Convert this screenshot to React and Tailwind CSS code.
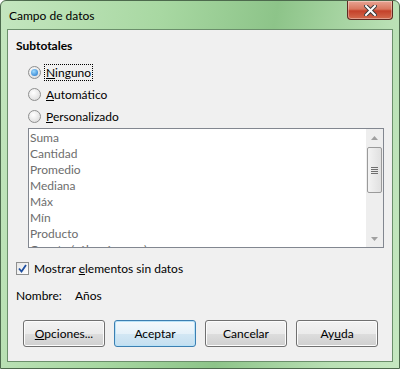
import React, { useState } from 'react';

const font = { fontFamily: '"Segoe UI", Lato, "Noto Sans", sans-serif' };

const items = ['Suma', 'Cantidad', 'Promedio', 'Mediana', 'Máx', 'Mín', 'Producto', 'Cuenta (sólo números)', 'DesvEst (muestra)', 'DesvEstP (población)', 'Var (muestra)', 'VarP (población)'];

const Radio = ({ checked, onClick, children }) => (
    <div className="flex items-center h-[22px] cursor-default" onClick={onClick}>
        <span className="w-[13px] h-[13px] shrink-0 rounded-full border border-[#8e8f8f] bg-[radial-gradient(circle_at_40%_35%,#ffffff,#d6d6d6)] flex items-center justify-center">
            {checked && <span className="w-[7px] h-[7px] rounded-full bg-[radial-gradient(circle_at_40%_35%,#9fdcff,#1a6fc7)]" />}
        </span>
        <span className={`ml-[4px] px-[1px] leading-[15px] ${checked ? 'outline outline-1 outline-dotted outline-black' : ''}`}>{children}</span>
    </div>
);

const Button = ({ children, primary }) => (
    <button
        className={`w-[82px] h-[27px] rounded-[3px] border text-[12px] text-black ${primary
            ? 'border-[#3c7fb1] bg-[linear-gradient(to_bottom,#f4f9fc_0%,#e5f1f9_50%,#d3e7f4_51%,#c4dff0_100%)] shadow-[inset_0_0_0_1px_#b8e2f8]'
            : 'border-[#707070] bg-[linear-gradient(to_bottom,#f2f2f2_0%,#ebebeb_50%,#dddddd_51%,#cfcfcf_100%)] shadow-[inset_0_0_0_1px_#fcfcfc]'}`}
    >
        {children}
    </button>
);

const App = () => {
    const [mode, setMode] = useState('none');
    const [showEmpty, setShowEmpty] = useState(true);

    return (
        <div style={font} className="w-[400px] h-[369px] flex flex-col rounded-t-[6px] border border-[#4d6a4d] bg-[linear-gradient(100deg,#c4e6bf_0%,#a8d8a2_35%,#8dc489_60%,#b9e0b4_85%,#c6e8c1_100%)] text-[12px] text-black overflow-hidden">
            {/* title bar */}
            <div className="h-[28px] flex justify-between shrink-0">
                <span className="pl-[8px] pt-[6px] text-[12px] text-black">Campo de datos</span>
                <div className="mr-[6px] w-[46px] h-[19px] rounded-b-[4px] border border-t-0 border-[#5e2a22] bg-[linear-gradient(to_bottom,#e8a493_0%,#d9775f_45%,#c4412a_55%,#d36b4e_100%)] flex items-center justify-center shadow-[inset_0_0_0_1px_rgba(255,255,255,0.35)]">
                    <svg width="13" height="11" viewBox="0 0 13 11">
                        <path d="M2 1 L11 10 M11 1 L2 10" stroke="#3b3b3b" strokeWidth="4" strokeLinecap="square" />
                        <path d="M2 1 L11 10 M11 1 L2 10" stroke="#ffffff" strokeWidth="2" strokeLinecap="square" />
                    </svg>
                </div>
            </div>

            {/* client area */}
            <div className="mx-[6px] mb-[6px] flex-1 border border-[#6b8f6b] bg-[#f0f0f0] px-[8px] flex flex-col">
                <div className="font-bold mt-[7px] h-[17px] leading-[17px]">Subtotales</div>

                <div className="pl-[12px] mt-[7px] flex flex-col">
                    <Radio checked={mode === 'none'} onClick={() => setMode('none')}><u>N</u>inguno</Radio>
                    <Radio checked={mode === 'auto'} onClick={() => setMode('auto')}><u>A</u>utomático</Radio>
                    <Radio checked={mode === 'custom'} onClick={() => setMode('custom')}><u>P</u>ersonalizado</Radio>
                </div>

                <div className="ml-[12px] mt-[1px] h-[120px] border border-[#828790] bg-white flex">
                    <div className="flex-1 overflow-hidden pl-[1px] pt-[1px] text-[#6d6d6d]">
                        {items.map((it) => (
                            <div key={it} className="h-[16px] leading-[16px] whitespace-nowrap">{it}</div>
                        ))}
                    </div>
                    <div className="w-[17px] bg-[#eeeeee] flex flex-col items-center">
                        <div className="h-[17px] flex items-center justify-center">
                            <svg width="7" height="4" viewBox="0 0 7 4"><path d="M3.5 0 L7 4 L0 4 Z" fill="#a0a0a0" /></svg>
                        </div>
                        <div className="mt-[1px] w-[15px] h-[46px] rounded-[2px] border border-[#9a9a9a] bg-[linear-gradient(to_right,#f3f3f3,#e0e0e0)] flex flex-col items-center justify-center gap-[1px]">
                            <span className="w-[7px] h-[1px] bg-[#6e6e6e]" />
                            <span className="w-[7px] h-[1px] bg-[#6e6e6e]" />
                            <span className="w-[7px] h-[1px] bg-[#6e6e6e]" />
                            <span className="w-[7px] h-[1px] bg-[#6e6e6e]" />
                        </div>
                        <div className="flex-1" />
                        <div className="h-[17px] flex items-center justify-center">
                            <svg width="7" height="4" viewBox="0 0 7 4"><path d="M0 0 L7 0 L3.5 4 Z" fill="#a0a0a0" /></svg>
                        </div>
                    </div>
                </div>

                <div className="flex items-center mt-[12px] h-[17px]" onClick={() => setShowEmpty(!showEmpty)}>
                    <span className="w-[13px] h-[13px] shrink-0 border border-[#8e8f8f] bg-[linear-gradient(135deg,#e6e6e6,#ffffff)] flex items-center justify-center">
                        {showEmpty && (
                            <svg width="9" height="9" viewBox="0 0 9 9">
                                <path d="M1 4.5 L3.5 7.5 L8 1" stroke="#1e4fa0" strokeWidth="1.8" fill="none" />
                            </svg>
                        )}
                    </span>
                    <span className="ml-[5px] whitespace-nowrap">Mostrar <u>e</u>lementos sin datos</span>
                </div>

                <div className="flex items-center mt-[10px] h-[17px]">
                    <span className="inline-block w-[59px] shrink-0">Nombre:</span>
                    <span>Años</span>
                </div>

                <div className="flex gap-[9px] mt-[16px] pl-[7px]">
                    <Button><u>O</u>pciones...</Button>
                    <Button primary>Aceptar</Button>
                    <Button>Cancelar</Button>
                    <Button>Ay<u>u</u>da</Button>
                </div>
            </div>
        </div>
    );
};

export default App;
